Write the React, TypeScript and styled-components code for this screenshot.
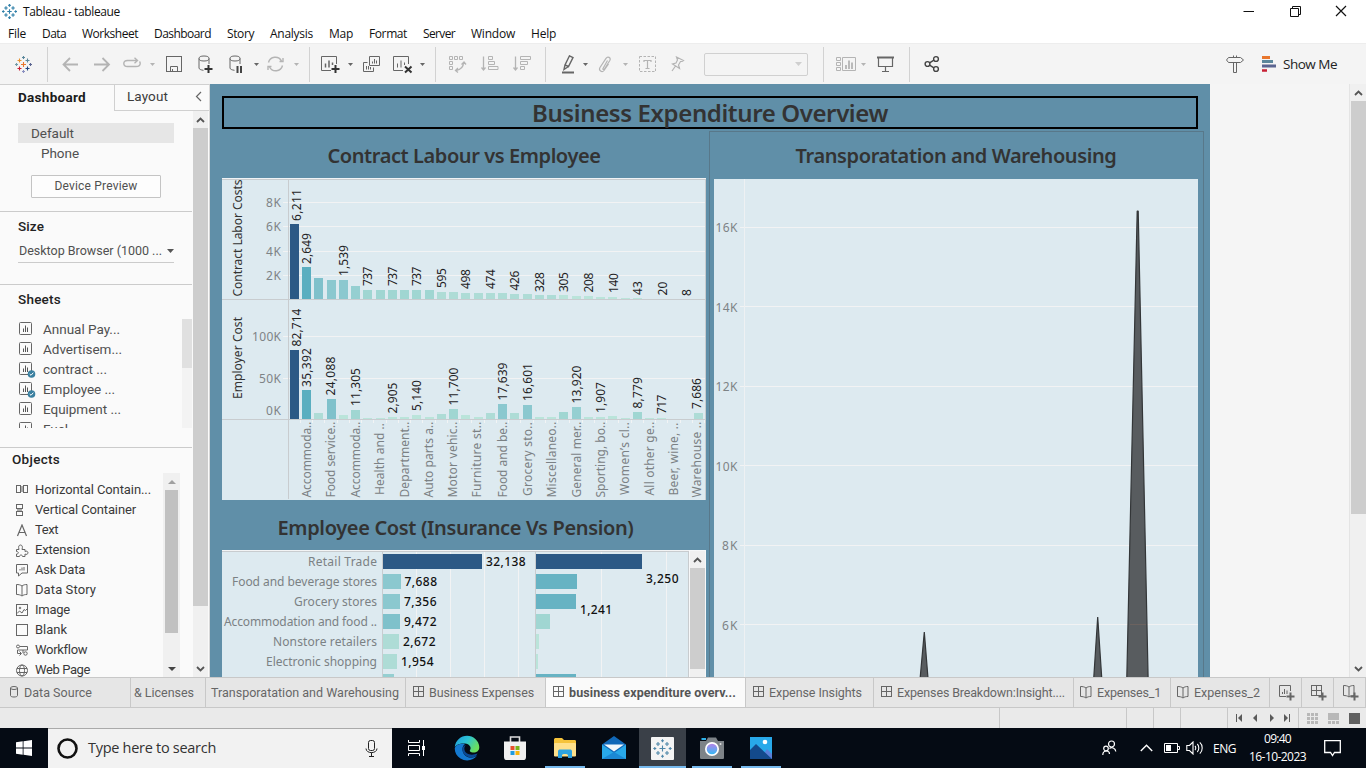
import React, { useLayoutEffect, useRef } from "react";
import styled, { createGlobalStyle, css } from "styled-components";

const UI = `Roboto, "Noto Sans", sans-serif`;
const WIN = `"Open Sans", "Noto Sans", sans-serif`;
const VIZ = `"Noto Sans", "Open Sans", sans-serif`;

const Global = createGlobalStyle`
  * { box-sizing: border-box; }
  body { margin: 0; background: #f5f5f5; font-family: ${UI}; overflow: hidden; }
  svg { display: block; flex: none; }
`;

/* ---------- text that is tracked to a given width ---------- */
const Txt = styled.span<{ $s: number; $wt?: number; $c?: string; $f?: string }>`
  display: inline-block;
  flex: none;
  white-space: pre;
  font-family: ${(p) => p.$f || UI};
  font-size: ${(p) => p.$s}px;
  font-weight: ${(p) => p.$wt || 400};
  color: ${(p) => p.$c || "#505050"};
  line-height: 1.25;
`;

type FitProps = { w: number; s: number; wt?: number; c?: string; f?: string; children: string };
function Fit({ w, s, wt, c, f, children }: FitProps) {
  const ref = useRef<HTMLSpanElement>(null);
  useLayoutEffect(() => {
    const el = ref.current;
    if (!el) return;
    el.style.letterSpacing = "0px";
    const natural = el.getBoundingClientRect().width;
    el.style.letterSpacing = `${(w - natural) / children.length}px`;
  }, [w, children]);
  return (
    <Txt ref={ref} $s={s} $wt={wt} $c={c} $f={f}>
      {children}
    </Txt>
  );
}

/* ---------- shell ---------- */
const Shell = styled.div`
  width: 1366px;
  height: 768px;
  display: flex;
  flex-direction: column;
  overflow: hidden;
`;
const Gap = styled.div<{ $w: number }>`
  width: ${(p) => p.$w}px;
  flex: none;
`;
const TitleBar = styled.header`
  height: 22px;
  flex: none;
  background: #fff;
  display: flex;
  align-items: center;
  padding: 1px 19px 0 2px;
  gap: 6px;
`;
const WinButtons = styled.div`
  margin-left: auto;
  display: flex;
  gap: 34px;
  padding-bottom: 2px;
`;
const MenuBar = styled.nav`
  height: 21px;
  flex: none;
  background: #fff;
  display: flex;
  align-items: center;
  padding: 2px 0 0 8px;
  gap: 16px;
`;
const Toolbar = styled.div`
  height: 41px;
  flex: none;
  background: #f4f4f4;
  border-top: 1px solid #ededed;
  display: flex;
  align-items: center;
`;
const Tool = styled.div<{ $ml: number; $dim?: boolean }>`
  margin-left: ${(p) => p.$ml}px;
  color: ${(p) => (p.$dim ? "#b4b4b4" : "#666")};
  flex: none;
`;
const ShowMe = styled.div`
  padding-bottom: 2px;
  margin-left: 6px;
`;
const Rule = styled.div<{ $ml: number }>`
  margin-left: ${(p) => p.$ml}px;
  width: 1px;
  height: 35px;
  background: #d2d2d2;
  flex: none;
`;
const Combo = styled.div`
  margin-left: 19px;
  width: 104px;
  height: 23px;
  border: 1px solid #d0d0d0;
  border-radius: 2px;
  display: flex;
  align-items: center;
  justify-content: flex-end;
  padding-right: 5px;
  color: #cfcfcf;
`;
const Work = styled.main`
  height: 593px;
  flex: none;
  display: flex;
`;

/* ---------- sidebar ---------- */
const Side = styled.aside`
  width: 210px;
  flex: none;
  background: #fafafa;
  border-right: 1px solid #d8d8d8;
  border-top: 1px solid #d0d0d0;
  display: flex;
  flex-direction: column;
  overflow: hidden;
`;
const SideTabs = styled.div`
  height: 26px;
  flex: none;
  display: flex;
`;
const ActiveTab = styled.div`
  width: 114px;
  padding: 2px 0 0 18px;
`;
const IdleTab = styled.div`
  flex: 1;
  border-left: 1px solid #d0d0d0;
  border-bottom: 1px solid #d0d0d0;
  padding: 3px 7px 0 12px;
  display: flex;
  justify-content: space-between;
`;
const SideBody = styled.div`
  display: flex;
  flex: 1;
  min-height: 0;
`;
const SideCol = styled.div`
  width: 193px;
  flex: none;
  overflow: hidden;
`;
const Section = styled.section<{ $h: number; $pl: number; $pt: number }>`
  height: ${(p) => p.$h}px;
  padding: ${(p) => p.$pt}px 0 0 ${(p) => p.$pl}px;
  width: 192px;
  border-bottom: 1px solid #cbcbcb;
  overflow: hidden;
  &:last-child { border-bottom: 0; }
`;
const DeviceRow = styled.div<{ $on?: boolean; $pl: number }>`
  width: 156px;
  height: 20px;
  display: flex;
  align-items: center;
  padding-left: ${(p) => p.$pl}px;
  background: ${(p) => (p.$on ? "#e6e6e6" : "transparent")};
`;
const PreviewButton = styled.div`
  margin: 12px 0 0 13px;
  width: 130px;
  height: 23px;
  border: 1px solid #c4c4c4;
  border-radius: 1px;
  display: flex;
  align-items: center;
  justify-content: center;
  background: #fdfdfd;
`;
const SizeSelect = styled.div`
  width: 156px;
  height: 24px;
  margin-top: 4px;
  border-bottom: 1px solid #cbcbcb;
  display: flex;
  align-items: center;
  justify-content: space-between;
  padding-left: 1px;
  color: #555;
`;
const ListArea = styled.div<{ $h: number; $mt: number }>`
  height: ${(p) => p.$h}px;
  margin-top: ${(p) => p.$mt}px;
  display: flex;
  justify-content: space-between;
  overflow: hidden;
`;
const ListCol = styled.div<{ $pt?: number; $pl?: number }>`
  padding: ${(p) => p.$pt || 0}px 0 0 ${(p) => p.$pl || 0}px;
`;
const ListRow = styled.div<{ $gap: number }>`
  height: 20px;
  display: flex;
  align-items: center;
  gap: ${(p) => p.$gap}px;
`;
const Track = styled.div<{ $w: number; $bg?: string }>`
  width: ${(p) => p.$w}px;
  flex: none;
  background: ${(p) => p.$bg || "#f0f0f0"};
  display: flex;
  flex-direction: column;
  align-items: center;
`;
const Cap = styled.div<{ $h: number; $c?: string }>`
  height: ${(p) => p.$h}px;
  width: 100%;
  flex: none;
  display: flex;
  align-items: center;
  justify-content: center;
  color: ${(p) => p.$c || "#555"};
`;
const Thumb = styled.div<{ $w: number; $h: number; $c?: string }>`
  width: ${(p) => p.$w}px;
  height: ${(p) => p.$h}px;
  flex: none;
  background: ${(p) => p.$c || "#cdcdcd"};
`;
const Grow = styled.div`
  flex: 1;
`;
const ObjIcon = styled.div`
  width: 13px;
  margin-left: 4px;
  color: #666;
`;
const ObjTrack = styled(Track)`
  margin-right: 12px;
`;

/* ---------- dashboard canvas ---------- */
const Canvas = styled.div`
  width: 1000px;
  height: 593px;
  flex: none;
  background: #608fa8;
  padding: 12px 6px 0 12px;
  overflow: hidden;
  display: flex;
  flex-direction: column;
`;
const Heading = styled.div`
  width: 976px;
  height: 33px;
  flex: none;
  border: 2px solid #000;
  display: flex;
  align-items: center;
  justify-content: center;
`;
const Columns = styled.div`
  display: flex;
  padding-top: 2px;
  flex: 1;
  min-height: 0;
`;
const LeftCol = styled.div`
  width: 487px;
  flex: none;
`;
const RightCol = styled.div`
  width: 495px;
  height: 700px;
  flex: none;
  border: 1px solid #58788a;
  padding-left: 4px;
`;
const SheetTitle = styled.div<{ $h: number; $pt: number; $w: number }>`
  width: ${(p) => p.$w}px;
  height: ${(p) => p.$h}px;
  padding-top: ${(p) => p.$pt}px;
  display: flex;
  justify-content: center;
  align-items: flex-start;
`;
const Split = styled.div`
  display: flex;
`;
const WhiteEdge = styled.div`
  width: 17px;
  padding: 1px 1px 0;
  background: #f7f8f9;
  display: flex;
`;
const Rest = styled.div`
  flex: 1;
  background: #f5f5f5;
  border-right: 1px solid #e4e4e4;
`;

/* ---------- bottom ---------- */
const Tabs = styled.div`
  height: 31px;
  flex: none;
  background: #e6e6e6;
  border-top: 1px solid #c8c8c8;
  border-bottom: 1px solid #c8c8c8;
  display: flex;
`;
const Tab = styled.div<{ $w: number; $pl?: number; $on?: boolean }>`
  width: ${(p) => p.$w}px;
  flex: none;
  height: 29px;
  border-right: 1px solid #c8c8c8;
  padding-left: ${(p) => p.$pl ?? 7}px;
  display: flex;
  align-items: center;
  gap: 5px;
  color: #666;
  overflow: hidden;
  ${(p) => p.$on && css`background: #fafafa;`}
`;
const Status = styled.div`
  height: 20px;
  flex: none;
  background: #eaeaea;
  display: flex;
  justify-content: flex-end;
`;
const Cell = styled.div<{ $w: number; $gap?: number; $pl?: number }>`
  width: ${(p) => p.$w}px;
  border-left: 1px solid #c8c8c8;
  padding-left: ${(p) => p.$pl || 0}px;
  display: flex;
  align-items: center;
  justify-content: center;
  gap: ${(p) => p.$gap || 0}px;
  color: #5a5a5a;
`;
const Taskbar = styled.footer`
  height: 40px;
  flex: none;
  background: #050b14;
  display: flex;
  align-items: stretch;
`;
const TaskItem = styled.div<{ $w: number; $run?: boolean; $on?: boolean }>`
  width: ${(p) => p.$w}px;
  flex: none;
  display: flex;
  align-items: center;
  justify-content: center;
  border-bottom: 2px solid ${(p) => (p.$run ? "#76b9ed" : "transparent")};
  padding-top: 2px;
  background: ${(p) => (p.$on ? "#3a4048" : "transparent")} padding-box;
`;
const Search = styled.div`
  width: 344px;
  flex: none;
  background: #f2f2f2;
  border-top: 1px solid #aaa;
  display: flex;
  align-items: center;
  padding: 0 14px 0 8px;
  gap: 9px;
`;
const Tray = styled.div`
  margin-left: auto;
  display: flex;
  align-items: center;
  color: #fff;
`;
const Clock = styled.div`
  display: flex;
  flex-direction: column;
  align-items: center;
  gap: 3px;
  margin: -1px 18px 0 13px;
`;

/* ---------- small drawings ---------- */
const Ico = ({ w, h, children, sw = 1 }: { w: number; h: number; children: React.ReactNode; sw?: number }) => (
  <svg width={w} height={h} viewBox={`0 0 ${w} ${h}`} fill="none" stroke="currentColor" strokeWidth={sw}>
    {children}
  </svg>
);
const Caret = ({ w = 5, up }: { w?: number; up?: boolean }) => (
  <svg width={w} height={Math.ceil(w / 2)} viewBox="0 0 10 5" preserveAspectRatio="none">
    <path d={up ? "M0 5L5 0L10 5Z" : "M0 0H10L5 5Z"} fill="currentColor" />
  </svg>
);
const Chevron = ({ down }: { down?: boolean }) => (
  <Ico w={9} h={6} sw={1.8}>
    <path d={down ? "M1 1L4.5 4.5L8 1" : "M1 5L4.5 1.5L8 5"} />
  </Ico>
);
const plus = (x: number, y: number, r: number) => `M${x - r} ${y}H${x + r}M${x} ${y - r}V${y + r}`;
const Logo = ({ size = 17, mono }: { size?: number; mono?: string }) => (
  <svg width={size} height={size} viewBox="0 0 17 17" fill="none" strokeWidth={mono ? 1.3 : 1.1}>
    <path d={plus(8.5, 8.5, 2.5)} stroke={mono || "#e8762d"} />
    <path d={plus(4.5, 4.5, 2)} stroke={mono || "#e8912d"} />
    <path d={plus(12.5, 4.5, 2)} stroke={mono || "#5b879b"} />
    <path d={plus(4.5, 12.5, 2)} stroke={mono || "#c72035"} />
    <path d={plus(12.5, 12.5, 2)} stroke={mono || "#1f447e"} />
    <path d={plus(8.5, 1.5, 1.5)} stroke={mono || "#59879b"} />
    <path d={plus(8.5, 15.5, 1.5)} stroke={mono || "#8a8fc0"} />
    <path d={plus(1.5, 8.5, 1.5)} stroke={mono || "#7199a6"} />
    <path d={plus(15.5, 8.5, 1.5)} stroke={mono || "#5c6692"} />
  </svg>
);
const Cylinder = ({ children }: { children?: React.ReactNode }) => (
  <Ico w={15} h={19}>
    <ellipse cx="6" cy="3.5" rx="5" ry="2.5" />
    <path d="M1 3.5V13c0 1.2 2 2 4.5 2.3M11 3.5V9" />
    {children}
  </Ico>
);
const SheetGlyph = ({ used }: { used?: boolean }) => (
  <Ico w={17} h={18}>
    <rect x="0.5" y="2.5" width="12" height="12" rx="1" stroke="#666" />
    <path d="M4.5 12V8.5M6.500 12V5.500M8.500 12V7.500" stroke="#555" />
    {used && (
      <>
        <circle cx="12.5" cy="14" r="3.8" fill="#3a80a0" stroke="none" />
        <path d="M10.7 14l1.300 1.300 2.300-2.600" stroke="#fff" />
      </>
    )}
  </Ico>
);
const GridGlyph = ({ add }: { add?: boolean }) => (
  <Ico w={add ? 16 : 11} h={add ? 17 : 15}>
    <rect x="0.5" y="1.5" width="10" height="10" />
    <path d="M5.5 1.5V11.5M0.5 6.5H10.5" />
    {add && <path d="M11.5 8.5v8M7.5 12.5h8" strokeWidth="2" />}
  </Ico>
);
const BookGlyph = ({ add }: { add?: boolean }) => (
  <Ico w={add ? 16 : 12} h={add ? 17 : 15}>
    <path d="M0.5 1.5c2 0 4 .3 5.5 1.5 1.5-1.200 3-1.500 5-1.500V11.500c-2 0-3.500.3-5 1.500C4.500 11.800 2.500 11.500 0.500 11.500zM6 3v9.500" />
    {add && <path d="M11.5 8.5v8M7.5 12.5h8" strokeWidth="2" />}
  </Ico>
);
const BarSheetAdd = () => (
  <Ico w={16} h={17}>
    <path d="M11.5 7V1.5H0.5V12.5H7" />
    <path d="M3.5 10V8M5.5 10V5M8 10V6.5" />
    <path d="M11.5 8.5v8M7.5 12.5h8" strokeWidth="2" />
  </Ico>
);

/* ---------- charts ---------- */
const NAVY = "#2c5985";
const barX = (i: number) => Math.round(67.9 + i * 12.25);

type VLabel = [string, number, number, number];
const topBars = [75, 32, 21, 19, 19, 13, 9, 9, 9, 9, 9, 9, 7, 7, 6, 6, 6, 6, 5, 5, 4, 4, 4, 3, 3, 2, 2, 1, 1];
const topColors = [NAVY, "#5aaec0", "#7fc1cb", "#8bc8cf", "#8bc8cf", "#95cfd1"];
const bottomBars = [69, 29, 6, 20, 4, 9, 1, 1, 2, 2, 4, 2, 5, 10, 4, 2, 6, 15, 6, 14, 2, 2, 7, 12, 2, 2, 3, 1, 7, 1, 1, 0, 0, 6];
const topColor = (i: number) => topColors[i] || (i < 12 ? "#a0d6d2" : i < 22 ? "#aedcd6" : "#bae4da");
const bottomColor = (h: number) =>
  h > 60 ? NAVY : h > 25 ? "#5aaec0" : h > 16 ? "#7fc1cb" : h > 13 ? "#8bc8cf" : h > 11 ? "#95cfd1" : h > 6 ? "#a0d6d2" : h > 4 ? "#aedcd6" : "#bae4da";

/* text, centre x, bottom y, length */
const topLabels: VLabel[] = [
  ["6,211", 297, 221, 32], ["2,649", 306.5, 264, 31], ["1,539", 343.5, 276, 31], ["737", 367.7, 286, 19.5],
  ["737", 392.7, 286, 19.5], ["737", 416.7, 286, 19.5], ["595", 441.7, 288, 20], ["498", 465.7, 289, 20],
  ["474", 490.7, 289, 20], ["426", 515, 290.5, 20], ["328", 539.5, 292, 20], ["305", 563.5, 292, 20],
  ["208", 588.5, 292.5, 20], ["140", 613.5, 293, 20], ["43", 637.5, 295, 14], ["20", 662.5, 295.5, 14], ["8", 686.5, 296, 7],
];
const bottomLabels: VLabel[] = [
  ["82,714", 297, 346.5, 38], ["35,392", 306.7, 387, 39], ["24,088", 330.7, 395.5, 39], ["11,305", 355.7, 406, 38],
  ["2,905", 392.7, 413.5, 31], ["5,140", 417, 411, 31], ["11,700", 453.7, 405.5, 38], ["17,639", 502.5, 400.5, 38],
  ["16,601", 528, 401, 38], ["13,920", 577, 403.5, 38], ["1,907", 601, 413, 31], ["8,779", 637.5, 408.5, 31.5],
  ["717", 662, 414, 19.5], ["7,686", 696.5, 409, 31],
];
const categories: VLabel[] = [
  ["Accommoda..", 306.7, 497.5, 76], ["Food service..", 330.7, 497.5, 76], ["Accommoda..", 355.7, 497.5, 76],
  ["Health and ..", 379.7, 495, 72], ["Department..", 404.5, 497.5, 76], ["Auto parts a..", 429, 497.5, 76],
  ["Motor vehic..", 453, 497.5, 76], ["Furniture st..", 477, 497.5, 76], ["Food and be..", 502.5, 497.5, 76],
  ["Grocery sto..", 527.5, 496, 74], ["Miscellaneo..", 551.5, 497.5, 76], ["General mer..", 577, 497.5, 76],
  ["Sporting, bo..", 601, 497.5, 76], ["Women’s cl..", 625, 495, 73], ["All other ge..", 649.5, 495.5, 74],
  ["Beer, wine, ..", 674, 495.5, 73], ["Warehouse ..", 696.5, 497.5, 76],
];
const Vertical = ({ d, color }: { d: VLabel; color: string }) => (
  <text
    transform={`translate(${d[1] - 222 + 4} ${d[2] - 178}) rotate(-90)`}
    textLength={d[3]}
    fontFamily={VIZ}
    fontSize="12"
    fill={color}
  >
    {d[0]}
  </text>
);

const LabourChart = () => (
  <svg width={484} height={322} viewBox="0 0 484 322">
    <rect width="484" height="322" fill="#ddeaf0" />
    <g shapeRendering="crispEdges">
      {[24, 48, 73, 97, 158, 200].map((y) => (
        <rect key={y} x="61" y={y} width="422" height="1" fill="#f2f3f4" />
      ))}
      {topBars.map((h, i) => (
        <rect key={i} x={barX(i)} y={121 - h} width="9" height={h} fill={topColor(i)} />
      ))}
      {bottomBars.map((h, i) => (
        <rect key={i} x={barX(i)} y={241 - h} width="9" height={h} fill={bottomColor(h)} />
      ))}
      {bottomBars.map((_, i) => (
        <rect key={i} x={barX(i) + 10} y="242" width="1" height="3" fill="#f2f4f5" />
      ))}
      <rect x="0" y="0" width="484" height="1" fill="#f0f3f5" />
      <rect x="0" y="1" width="484" height="1" fill="#c8cccf" />
      <rect x="0" y="121" width="484" height="1" fill="#c8cccf" />
      <rect x="0" y="241" width="484" height="1" fill="#c8cccf" />
      <rect x="66" y="1" width="1" height="320" fill="#c8cccf" />
      <rect x="483" y="1" width="1" height="321" fill="#c8cccf" />
    </g>
    {[["8K", 24, 15], ["6K", 48.5, 15], ["4K", 73, 15], ["2K", 97.5, 15], ["100K", 158.5, 29], ["50K", 200.5, 22], ["0K", 232.5, 15]].map(
      ([t, y, w]) => (
        <text key={t} x={59 - Number(w)} y={Number(y) + 4.5} textLength={w} fontFamily={VIZ} fontSize="12" fill="#7d8386">
          {t}
        </text>
      )
    )}
    <Vertical d={["Contract Labor Costs", 238, 296.5, 117]} color="#333" />
    <Vertical d={["Employer Cost", 238, 399, 82]} color="#333" />
    {topLabels.map((d, i) => <Vertical key={i} d={d} color="#1f2325" />)}
    {bottomLabels.map((d, i) => <Vertical key={i} d={d} color="#1f2325" />)}
    {categories.map((d, i) => <Vertical key={i} d={d} color="#7b8184" />)}
  </svg>
);

type CostRow = { name: string; len: number; a: number; label?: string; b: number; ca: string; cb: string };
const costs: CostRow[] = [
  { name: "Retail Trade", len: 69, a: 99, label: "32,138", b: 106, ca: NAVY, cb: NAVY },
  { name: "Food and beverage stores", len: 145, a: 18, label: "7,688", b: 41, ca: "#8bc8cf", cb: "#67b3c3" },
  { name: "Grocery stores", len: 83, a: 17, label: "7,356", b: 40, ca: "#8bc8cf", cb: "#67b3c3" },
  { name: "Accommodation and food ..", len: 153, a: 17, label: "9,472", b: 14, ca: "#7fc1cb", cb: "#a0d6d2" },
  { name: "Nonstore retailers", len: 104, a: 16, label: "2,672", b: 3, ca: "#aedcd6", cb: "#bae4da" },
  { name: "Electronic shopping", len: 111, a: 14, label: "1,954", b: 2, ca: "#aedcd6", cb: "#bae4da" },
  { name: "", len: 0, a: 11, b: 40, ca: "#95cfd1", cb: "#67b3c3" },
];
const CostChart = () => (
  <svg width={467} height={127} viewBox="0 0 467 127">
    <rect width="467" height="127" fill="#ddeaf0" />
    <g shapeRendering="crispEdges">
      {[194, 228, 262, 296, 379, 444].map((x) => (
        <rect key={x} x={x} y="2" width="1" height="125" fill="#f2f3f4" />
      ))}
      {costs.map((r, i) => (
        <g key={i}>
          <rect x="161" y={4 + i * 20} width={r.a} height="15" fill={r.ca} />
          <rect x="314" y={4 + i * 20} width={r.b} height="15" fill={r.cb} />
        </g>
      ))}
      <rect width="467" height="1" fill="#f3f4f5" />
      <rect y="1" width="467" height="1" fill="#c8cccf" />
      <rect x="160" y="1" width="1" height="126" fill="#c8cccf" />
      <rect x="313" y="1" width="1" height="126" fill="#c8cccf" />
      <rect x="466" y="1" width="1" height="126" fill="#c8cccf" />
    </g>
    {costs.map((r, i) =>
      r.name ? (
        <g key={i} fontFamily={VIZ} fontSize="12">
          <text x={155 - r.len} y={16 + i * 20} textLength={r.len} fill="#7b8184">{r.name}</text>
          <text x={[264, 182.5, 182, 182, 181, 179][i]} y={16 + i * 20} textLength={i ? 32.5 : 39.5} fill="#111" fontWeight="500">{r.label}</text>
        </g>
      ) : null
    )}
    <text x="424" y="33" textLength="32.5" fontFamily={VIZ} fontSize="12" fontWeight="500" fill="#111">3,250</text>
    <text x="358" y="64" textLength="32" fontFamily={VIZ} fontSize="12" fontWeight="500" fill="#111">1,241</text>
  </svg>
);

const WarehouseChart = () => (
  <svg width={484} height={498} viewBox="0 0 484 498">
    <rect width="484" height="498" fill="#ddeaf0" />
    <g shapeRendering="crispEdges">
      {[48, 127, 207, 286, 366, 445].map((y) => (
        <rect key={y} x="26" y={y} width="458" height="1" fill="#f2f3f4" />
      ))}
      <rect x="30" y="0" width="1" height="498" fill="#eef1f3" />
    </g>
    <g fill="#585c5f" stroke="#333638" strokeWidth="1.2" strokeLinejoin="bevel">
      <path d="M205.8 503L210.3 453L214.3 503Z" />
      <path d="M379.5 503L383.7 438L388 503Z" />
      <path d="M412.7 503L423.2 32L424.2 32L434.200 503Z" />
    </g>
    <path d="M416 445.5H432" stroke="#6b625f" strokeWidth="1" />
    {["16K", "14K", "12K", "10K", "8K", "6K"].map((t, i) => (
      <text key={t} x={t.length > 2 ? 1.5 : 8} y={53 + i * 79.5} textLength={t.length > 2 ? 22 : 15.5} fontFamily={VIZ} fontSize="12" fill="#7d8386">
        {t}
      </text>
    ))}
  </svg>
);

/* ---------- data ---------- */
const menus: [string, number][] = [
  ["File", 18], ["Data", 24], ["Worksheet", 56], ["Dashboard", 57], ["Story", 27], ["Analysis", 43],
  ["Map", 24], ["Format", 38], ["Server", 32], ["Window", 44], ["Help", 25],
];
const sheets: [string, number, boolean][] = [
  ["Annual Pay...", 77, false], ["Advertisem...", 79, false], ["contract ...", 64, true],
  ["Employee ...", 72, true], ["Equipment ...", 78, false], ["Fuel", 25, false],
];
const objects: [string, number, React.ReactNode][] = [
  ["Horizontal Contain...", 116, <Ico w={13} h={13}><rect x="0.5" y="1.5" width="4" height="7" /><rect x="7.5" y="1.5" width="4" height="7" /><path d="M6 2v6" strokeWidth="2" stroke="#aaa" /></Ico>],
  ["Vertical Container", 101, <Ico w={13} h={13}><rect x="0.5" y="0.5" width="6" height="4" /><rect x="0.5" y="7.5" width="6" height="4" /><path d="M1 6h5" strokeWidth="2" stroke="#aaa" /></Ico>],
  ["Text", 23, <Ico w={13} h={13}><path d="M1.500 12L6 1L10.500 12M3 8.500H9" strokeWidth="1.200" /></Ico>],
  ["Extension", 55, <Ico w={13} h={13}><path d="M.5 5.500H3C2 2.500 3 1 4.500 1S7 2.500 6 5.500H9V7.500C10.500 6.500 12 7.500 12 8.800S10.500 11 9 10V12.500H6.500C6.500 10.500 3.500 10.500 3.500 12.500H.5V10C3 10 3 7.500.5 7.500Z" /></Ico>],
  ["Ask Data", 50, <Ico w={13} h={13}><path d="M.5.5H11.500V9H6L2.500 12V9H.5Z" /><path d="M4 6.500V5M6 6.500V3.500M8 6.500V3" stroke="#999" strokeWidth="1.500" /></Ico>],
  ["Data Story", 61, <BookGlyph />],
  ["Image", 35, <Ico w={13} h={13}><rect x=".5" y=".5" width="11" height="11" /><path d="M1 9.500L3.500 7L6 9L8 5.500L9.500 6.500L11.500 4.500" /><circle cx="4" cy="4" r=".8" /></Ico>],
  ["Blank", 32, <Ico w={13} h={13}><rect x=".5" y=".5" width="11" height="11" /></Ico>],
  ["Workflow", 52, <Ico w={13} h={13}><circle cx="2" cy="2.500" r="1.500" /><path d="M4 2.500H11.500V6H1.500V9.500H5M3.500 7.500L5.500 9.500L3.500 11.500M7 6V9" /><circle cx="9.500" cy="9.500" r="1.700" /></Ico>],
  ["Web Page", 55, <Ico w={13} h={13}><circle cx="6" cy="6.500" r="5.500" /><ellipse cx="6" cy="6.500" rx="2.500" ry="5.500" /><path d="M1 4.500H11M1 8.500H11" /></Ico>],
];

function Sidebar() {
  return (
    <Side>
      <SideTabs>
        <ActiveTab><Fit w={68} s={13.5} wt={700} c="#1c1c1c">Dashboard</Fit></ActiveTab>
        <IdleTab>
          <Fit w={41} s={13.5} c="#3c3c3c">Layout</Fit>
          <Tool $ml={0}><Ico w={7} h={18} sw={1.2}><path d="M6 4L1.500 8.500L6 13" /></Ico></Tool>
        </IdleTab>
      </SideTabs>
      <SideBody>
        <SideCol>
          <Section $h={101} $pl={18} $pt={12}>
            <DeviceRow $on $pl={13}><Fit w={43} s={13.5}>Default</Fit></DeviceRow>
            <DeviceRow $pl={23}><Fit w={38} s={13.5}>Phone</Fit></DeviceRow>
            <PreviewButton><Fit w={83} s={12}>Device Preview</Fit></PreviewButton>
          </Section>
          <Section $h={73} $pl={18} $pt={4}>
            <Fit w={26} s={13.5} wt={500} c="#222">Size</Fit>
            <SizeSelect>
              <Fit w={143} s={12.5}>Desktop Browser (1000 ...</Fit>
              <Caret w={7} />
            </SizeSelect>
          </Section>
          <Section $h={163} $pl={18} $pt={4}>
            <Fit w={43} s={13.5} wt={500} c="#222">Sheets</Fit>
            <ListArea $h={109} $mt={11}>
              <ListCol $pl={1}>
                {sheets.map(([t, w, used]) => (
                  <ListRow key={t} $gap={7}>
                    <SheetGlyph used={used} />
                    <Fit w={w} s={13.5}>{t}</Fit>
                  </ListRow>
                ))}
              </ListCol>
              <Track $w={10} $bg="#f3f3f3"><Thumb $w={10} $h={49} $c="#e0e0e0" /></Track>
            </ListArea>
          </Section>
          <Section $h={240} $pl={12} $pt={1}>
            <Fit w={48} s={13.5} wt={500} c="#222">Objects</Fit>
            <ListArea $h={204} $mt={5}>
              <ListCol $pt={7}>
                {objects.map(([t, w, icon]) => (
                  <ListRow key={t} $gap={6}>
                    <ObjIcon>{icon}</ObjIcon>
                    <Fit w={w} s={13} c="#3a3a3a">{t}</Fit>
                  </ListRow>
                ))}
              </ListCol>
              <ObjTrack $w={17}>
                <Cap $h={17} $c="#a0a0a0"><Caret w={8} up /></Cap>
                <Thumb $w={13} $h={143} $c="#c1c1c1" />
                <Grow />
                <Cap $h={17} $c="#444"><Caret w={8} /></Cap>
              </ObjTrack>
            </ListArea>
          </Section>
        </SideCol>
        <Track $w={15}>
          <Cap $h={17}><Chevron /></Cap>
          <Thumb $w={15} $h={478} />
          <Grow />
          <Cap $h={17}><Chevron down /></Cap>
        </Track>
      </SideBody>
    </Side>
  );
}

export default function App() {
  return (
    <Shell>
      <Global />
      <TitleBar>
        <Logo size={15} mono="#2f7fa8" />
        <Fit w={97} s={12} f={WIN} c="#111">Tableau - tableaue</Fit>
        <WinButtons>
          <Ico w={12} h={12}><path d="M0.5 6.5H11" stroke="#111" /></Ico>
          <Ico w={12} h={12}><path d="M1.5 3.5H9.5V11.5H1.5ZM3.5 3.5V1.5H11.5V9.5H9.5" stroke="#111" /></Ico>
          <Ico w={12} h={12}><path d="M1 1L11 11M11 1L1 11" stroke="#111" strokeWidth="1.2" /></Ico>
        </WinButtons>
      </TitleBar>
      <MenuBar>
        {menus.map(([t, w]) => <Fit key={t} w={w} s={12} f={WIN} c="#111">{t}</Fit>)}
      </MenuBar>
      <Toolbar>
        <Tool $ml={15}><Logo size={17} /></Tool>
        <Rule $ml={15} />
        <Tool $ml={14} $dim><Ico w={17} h={15} sw={1.8}><path d="M16 7.5H1.5M8 1L1.5 7.5L8 14" /></Ico></Tool>
        <Tool $ml={15} $dim><Ico w={17} h={15} sw={1.8}><path d="M0 7.5H15M8.5 1L15 7.5L8.5 14" /></Ico></Tool>
        <Tool $ml={12} $dim><Ico w={18} h={14} sw={1.4}><path d="M14 3.5H4.5C2 3.5 .8 4.5 .8 6.5S2 9.5 4.5 9.5H13C16 9.5 17.2 8.5 17.2 6.5C17.2 5.5 17 5 16.5 4.500M11.500 .8L14.500 3.500L11.500 6.200" /></Ico></Tool>
        <Tool $ml={9} $dim><Caret /></Tool>
        <Tool $ml={11}><Ico w={16} h={17}><rect x=".5" y=".5" width="15" height="15" /><path d="M4.5 15.5V10.5H11.5V15.5M6.5 15V13" /></Ico></Tool>
        <Tool $ml={16}><Cylinder><path d="M10.5 10v8M6.5 14h8" stroke="#333" strokeWidth="2" /></Cylinder></Tool>
        <Tool $ml={16}><Cylinder><path d="M8.5 11v7M12 11v7" stroke="#444" strokeWidth="2" /></Cylinder></Tool>
        <Tool $ml={10}><Caret /></Tool>
        <Tool $ml={8} $dim><Ico w={17} h={16} sw={1.4}><path d="M1.5 6.5A7 7 0 0 1 14.5 5M15.5 9.5A7 7 0 0 1 2.5 11M16 2V5.5H12.5M1 14V10.5H4.5" /></Ico></Tool>
        <Tool $ml={10} $dim><Caret /></Tool>
        <Rule $ml={10} />
        <Tool $ml={10}><Ico w={20} h={19}><path d="M16.5 9V1.5H1.5V15.5H11" /><path d="M5.5 12.5V8.5M9 12.5V5.5M12.5 10V7.5" strokeWidth="1.5" /><path d="M15.5 10v8M11.5 14h8" stroke="#333" strokeWidth="2" /></Ico></Tool>
        <Tool $ml={8}><Caret /></Tool>
        <Tool $ml={10}><Ico w={18} h={17}><path d="M6.5 .5H16.5V9.5H6.5ZM4.5 6.5H.5V15.5H10.5V11.5M3.5 13.5V10M5.5 13.5V10M7.5 13.5V11M9.5 7.5V5.5M11.5 7.5V3M13.5 7.5V4.5" /></Ico></Tool>
        <Tool $ml={12}><Ico w={20} h={19}><path d="M15.5 9V1.5H.5V15.5H10M4.5 12.5V8.5M8 12.5V5.5M11.5 10V7.5" /><path d="M12 11.5L18.5 17.5M18.5 11.5L12 17.5" stroke="#333" strokeWidth="2" /></Ico></Tool>
        <Tool $ml={7}><Caret /></Tool>
        <Rule $ml={10} />
        <Tool $ml={13} $dim><Ico w={18} h={18}><path d="M.5 1.500h3v3h-3zM5.500 1.500h3v3h-3zM10.500 1.500h3v3h-3zM.5 6.500h3v3h-3zM.5 11.500h3v3h-3z" /><path d="M14.500 7.500C14.500 12 12 14.500 7 15.500M12.500 9.500L15 7L17 9.500M9 13L6.500 15.500L9 17.500" strokeWidth="1.300" /></Ico></Tool>
        <Tool $ml={14} $dim><Ico w={18} h={16}><path d="M2.5 0.5V14M.5 11.5L2.500 14L4.500 11.500" strokeWidth="1.300" /><path d="M7.500 .5h4v3h-4zM7.500 5.500h6v3h-6zM7.500 10.500h9.500v3h-9.500z" /></Ico></Tool>
        <Tool $ml={14} $dim><Ico w={18} h={16}><path d="M2.5 0.5V14M.5 11.5L2.500 14L4.500 11.500" strokeWidth="1.300" /><path d="M7.500 .5h10v3h-10zM7.500 5.500h7v3h-7zM7.500 10.500h4v3h-4z" /></Ico></Tool>
        <Rule $ml={14} />
        <Tool $ml={16}><Ico w={13} h={19}><path d="M7.500 .8L11 2.500L6.500 11.500L3 10ZM3 10L2 14.500L6.500 11.500" strokeWidth="1.400" /><path d="M0 17.500H12" strokeWidth="2" /></Ico></Tool>
        <Tool $ml={8}><Caret /></Tool>
        <Tool $ml={10} $dim><Ico w={14} h={17} sw={1.2}><path d="M9.500 4.500L5 12.500C4.500 13.500 6 14 6.500 13L11.800 4.500C13.300 1.700 9.700 -.3 8 2.300L2 11.500C.3 14.500 4 17 6 14.500L10.500 8" /></Ico></Tool>
        <Tool $ml={11} $dim><Caret /></Tool>
        <Tool $ml={11} $dim><Ico w={17} h={17}><rect x=".5" y=".5" width="16" height="15" strokeDasharray="2.5 1.500" /><path d="M5 6V4.500H12V6M8.500 4.500V12.500M6.500 12.500H10.500" strokeWidth="1.200" /></Ico></Tool>
        <Tool $ml={15} $dim><Ico w={14} h={16} sw={1.2}><path d="M5.500 1L12.500 4.500L11 5.500L9.500 5.500L7.500 9L8.500 12.500L1.500 8L5 7L6.500 4ZM4.500 10L1 15" /></Ico></Tool>
        <Combo><Caret w={7} /></Combo>
        <Rule $ml={15} />
        <Tool $ml={12} $dim><Ico w={21} h={15}><path d="M.5 .5h4v3h-4zM.5 5.500h4v3h-4zM.5 10.500h4v3h-4zM6.500 .5h13v13h-13z" /><path d="M10 12V8M13 12V3.500M16 12V5.500" strokeWidth="1.800" /></Ico></Tool>
        <Tool $ml={4} $dim><Caret /></Tool>
        <Tool $ml={11}><Ico w={17} h={17}><path d="M0 1.500H17" strokeWidth="2" /><path d="M1.500 2V10.500H15.500V2M8.500 10.500V15.500M5 15.500H12" strokeWidth="1.200" /></Ico></Tool>
        <Rule $ml={15} />
        <Tool $ml={14}><Ico w={16} h={18} sw={1.4}><circle cx="3.500" cy="9" r="2.400" stroke="#444" /><circle cx="12" cy="4" r="2.400" stroke="#444" /><circle cx="12" cy="14" r="2.400" stroke="#444" /><path d="M5.600 7.800L9.900 5.200M5.600 10.200L9.900 12.800" stroke="#444" /></Ico></Tool>
        <Gap $w={286} />
        <Tool $ml={0}><Ico w={19} h={18}><path d="M2.5 2.500H14.500L17.500 5L14.500 7.500H2.500L.5 5ZM7.500 .5V2.500M10.500 .5V2.500M7.500 7.500V17.500H10.500V7.500" /></Ico></Tool>
        <Tool $ml={17}><Ico w={15} h={16}><path d="M0 1.500H8" stroke="#e8762d" strokeWidth="3" /><path d="M0 5.500H11" stroke="#5b879b" strokeWidth="3" /><path d="M0 10H14" stroke="#5b6591" strokeWidth="3" /><path d="M0 14.500H5" stroke="#c72035" strokeWidth="2.500" /></Ico></Tool>
        <ShowMe><Fit w={54} s={13.5} f={WIN} c="#222">Show Me</Fit></ShowMe>
      </Toolbar>

      <Work>
        <Sidebar />
        <Canvas>
          <Heading><Fit w={356} s={24} wt={600} f={VIZ} c="#333">Business Expenditure Overview</Fit></Heading>
          <Columns>
            <LeftCol>
              <SheetTitle $w={484} $h={47} $pt={12}><Fit w={273} s={20} wt={600} f={VIZ} c="#333">Contract Labour vs Employee</Fit></SheetTitle>
              <LabourChart />
              <SheetTitle $w={467} $h={50} $pt={15}><Fit w={356} s={20} wt={600} f={VIZ} c="#333">Employee Cost (Insurance Vs Pension)</Fit></SheetTitle>
              <Split>
                <CostChart />
                <WhiteEdge>
                  <Track $w={15}>
                    <Cap $h={17}><Chevron /></Cap>
                    <Thumb $w={15} $h={101} />
                  </Track>
                </WhiteEdge>
              </Split>
            </LeftCol>
            <RightCol>
              <SheetTitle $w={484} $h={47} $pt={11}><Fit w={321} s={20} wt={600} f={VIZ} c="#333">Transporatation and Warehousing</Fit></SheetTitle>
              <WarehouseChart />
            </RightCol>
          </Columns>
        </Canvas>
        <Rest />
        <Track $w={16}>
          <Cap $h={17}><Chevron /></Cap>
          <Thumb $w={15} $h={413} />
          <Grow />
          <Cap $h={17}><Chevron down /></Cap>
        </Track>
      </Work>

      <Tabs>
        <Tab $w={131} $pl={10}><Ico w={9} h={15}><ellipse cx="4" cy="3" rx="3.500" ry="1.500" /><path d="M.5 3V10.500C.5 12.500 7.500 12.500 7.500 10.500V3" /></Ico><Fit w={68} s={12.5} c="#666">Data Source</Fit></Tab>
        <Tab $w={75} $pl={3}><Fit w={60} s={12.5} c="#666">& Licenses</Fit></Tab>
        <Tab $w={200} $pl={5}><Fit w={188} s={12.5} c="#666">Transporatation and Warehousing</Fit></Tab>
        <Tab $w={140}><GridGlyph /><Fit w={105} s={12.5} c="#666">Business Expenses</Fit></Tab>
        <Tab $w={200} $on><GridGlyph /><Fit w={167} s={12.5} wt={700} c="#555">business expenditure overv...</Fit></Tab>
        <Tab $w={128}><GridGlyph /><Fit w={93} s={12.5} c="#666">Expense Insights</Fit></Tab>
        <Tab $w={200}><GridGlyph /><Fit w={168} s={12.5} c="#666">Expenses Breakdown:Insight....</Fit></Tab>
        <Tab $w={97} $pl={6}><BookGlyph /><Fit w={64} s={12.5} c="#666">Expenses_1</Fit></Tab>
        <Tab $w={99} $pl={6}><BookGlyph /><Fit w={66} s={12.5} c="#666">Expenses_2</Fit></Tab>
        <Tab $w={32} $pl={9}><BarSheetAdd /></Tab>
        <Tab $w={32} $pl={9}><GridGlyph add /></Tab>
        <Tab $w={32} $pl={9}><BookGlyph add /></Tab>
      </Tabs>
      <Status>
        <Cell $w={127} /><Cell $w={27} /><Cell $w={27} /><Cell $w={47} />
        <Cell $w={71} $gap={9}>
          <Ico w={7} h={8}><path d="M.5 0V8" /><path d="M6 0V8L2 4Z" fill="currentColor" stroke="none" /></Ico>
          <Ico w={7} h={8}><path d="M5 0V8L1 4Z" fill="currentColor" stroke="none" /></Ico>
          <Ico w={7} h={8}><path d="M2 0V8L6 4Z" fill="currentColor" stroke="none" /></Ico>
          <Ico w={7} h={8}><path d="M5.5 0V8" /><path d="M0 0V8L4 4Z" fill="currentColor" stroke="none" /></Ico>
        </Cell>
        <Cell $w={68} $gap={10} $pl={2}>
          <Ico w={11} h={11}><g fill="#b8b8b8" stroke="none">{[0, 4, 8].map((x) => [0, 4, 8].map((y) => <rect key={`${x}${y}`} x={x} y={y} width="3" height="3" />))}</g></Ico>
          <Ico w={11} h={11}><g fill="#b8b8b8" stroke="none"><rect width="11" height="7" />{[0, 4, 8].map((x) => <rect key={x} x={x} y="8" width="3" height="3" />)}</g></Ico>
          <Ico w={11} h={11}><rect width="11" height="11" fill="#606060" stroke="none" /></Ico>
        </Cell>
      </Status>

      <Taskbar>
        <TaskItem $w={48}><svg width="16" height="16" viewBox="0 0 16 16"><path fill="#fff" d="M0 2.200L6.700 1.300V7.600H0ZM7.500 1.200L16 0V7.600H7.500ZM0 8.400H6.700V14.700L0 13.800ZM7.500 8.400H16V16L7.500 14.800Z" /></svg></TaskItem>
        <Search>
          <Ico w={23} h={23} sw={2.6}><circle cx="11.500" cy="11.500" r="9" stroke="#111" /></Ico>
          <Fit w={128} s={14.5} f={WIN} c="#333">Type here to search</Fit>
          <Grow />
          <Ico w={13} h={17}><rect x="3.500" y=".5" width="6" height="10" rx="2" stroke="#222" /><path d="M1 8.500C1 14 12 14 12 8.500M6.500 12.500V16.500M4 16.500H9" stroke="#222" /></Ico>
        </Search>
        <TaskItem $w={48}><Ico w={17} h={16}><path d="M.5 0V2.500H11.500V0M.5 16V13.500H11.500V16M.5 5.500H11.500V10.500H.5ZM15.500 0V16" stroke="#fff" /><rect x="14" y="6" width="3" height="4" fill="#fff" stroke="none" /></Ico></TaskItem>
        <Gap $w={2} />
        <TaskItem $w={49}>
          <svg width="26" height="26" viewBox="0 0 26 26">
            <defs>
              <linearGradient id="eg" x1="0" y1="0" x2="1" y2=".5"><stop offset="0" stopColor="#1f9ade" /><stop offset=".5" stopColor="#2cc3d5" /><stop offset="1" stopColor="#6be05c" /></linearGradient>
            </defs>
            <path d="M.8 12A12.300 12.300 0 0 1 25.300 12C25.500 16 22 18 18.500 17.500C15.500 17 15.500 15.500 16.300 14.500C17.500 12.500 15.500 9 11 8.500C6 8 2 10 .8 12Z" fill="url(#eg)" />
            <path d="M.8 13C2 9.500 7 8 11 9C8.500 10.500 8 14 9 17C10.200 20.800 14 23 18 22.500C20 22.300 22 21.500 23.500 20C20 25.500 12 27 6.500 23.500C2.500 21 .5 17 .8 13Z" fill="#1479d0" />
            <path d="M12 10C9.500 12 10 16 12.500 18C15.500 20.300 20 20 23.500 18.500C22.500 21 20 22.500 17.500 22.500C12 22.500 8 18 8.500 14C8.800 12 10 10.200 12 10Z" fill="#0a4a94" />
          </svg>
        </TaskItem>
        <TaskItem $w={48}>
          <svg width="24" height="26" viewBox="0 0 24 26">
            <path d="M7.500 7V2H16.500V7" fill="none" stroke="#ddd" strokeWidth="1.600" />
            <path d="M1 6.500H23V22C23 23.500 22.500 25 21 25H3C1.500 25 1 23.500 1 22Z" fill="#f1f1f1" />
            <rect x="7.500" y="11" width="4" height="4" fill="#e8502d" /><rect x="12.500" y="11" width="4" height="4" fill="#7bb51a" />
            <rect x="7.500" y="16" width="4" height="4" fill="#1f9bde" /><rect x="12.500" y="16" width="4" height="4" fill="#f7b50c" />
          </svg>
        </TaskItem>
        <Gap $w={6} />
        <TaskItem $w={40} $run>
          <svg width="22" height="20" viewBox="0 0 22 20">
            <path d="M0 1.500C0 .5 1 0 1.500 0H8L10 2H20.500C21.500 2 22 2.500 22 3.500V18H0Z" fill="#f5c33b" />
            <rect y="5" width="22" height="13.500" rx="1" fill="#ffe08a" />
            <path d="M4 20V13.500C4 12 5 11.500 6 11.500H16C17 11.500 18 12 18 13.500V20H14V17C14 15.500 8 15.500 8 17V20Z" fill="#2ea3e0" />
          </svg>
        </TaskItem>
        <Gap $w={4} />
        <TaskItem $w={49}>
          <svg width="24" height="24" viewBox="0 0 24 24">
            <path d="M0 8.500L12 0L24 8.500V23H0Z" fill="#1168b8" />
            <path d="M0 8.500L12 17L24 8.500V23H0Z" fill="#28a8e8" />
            <path d="M0 23L12 16L24 23Z" fill="#1b88d4" />
            <path d="M2 8.500H22L12 15.600Z" fill="#f4f8fb" />
          </svg>
        </TaskItem>
        <Gap $w={1} />
        <TaskItem $w={47} $run $on>
          <svg width="23" height="23" viewBox="0 0 23 23"><rect width="23" height="23" rx="1" fill="#f4f4f4" /><g transform="translate(2 2)" fill="none" stroke="#4d86a8" strokeWidth="1.100"><path d={[plus(9.5, 9.5, 3), plus(5, 5, 2), plus(14, 5, 2), plus(5, 14, 2), plus(14, 14, 2), plus(9.5, 1.8, 1.5), plus(9.5, 17.2, 1.5), plus(1.8, 9.5, 1.5), plus(17.2, 9.5, 1.5)].join("")} /></g></svg>
        </TaskItem>
        <Gap $w={6} />
        <TaskItem $w={40} $run>
          <svg width="24" height="22" viewBox="0 0 24 22">
            <defs><linearGradient id="cg" x1="0" y1="0" x2="0" y2="1"><stop offset="0" stopColor="#b583e8" /><stop offset="1" stopColor="#35b8f5" /></linearGradient></defs>
            <path d="M1.500 3V1H6V3" fill="#2db0e8" />
            <path d="M0 4H6L8 .5H16L18 4H24V20.500C24 21.500 23.500 22 22.500 22H1.500C.5 22 0 21.500 0 20.500Z" fill="#7d8388" />
            <circle cx="12" cy="12" r="7" fill="#fff" /><circle cx="12" cy="12" r="5.300" fill="url(#cg)" /><circle cx="20.500" cy="7" r="1" fill="#ddd" />
          </svg>
        </TaskItem>
        <Gap $w={9} />
        <TaskItem $w={40} $run>
          <svg width="22" height="22" viewBox="0 0 22 22">
            <rect width="22" height="22" fill="#28a9ea" />
            <path d="M10 22L17 12L22 17V22Z" fill="#5a7fd8" /><path d="M0 13L6 7L22 22H0Z" fill="#134a8c" /><circle cx="15" cy="5" r="2.300" fill="#fff" />
          </svg>
        </TaskItem>
        <Tray>
          <Ico w={15} h={16} sw={1.2}><circle cx="9.500" cy="4" r="3" /><circle cx="4" cy="8.500" r="2.300" /><path d="M.8 15C.8 12.500 2.500 11 4.500 11S7.500 12.500 7.500 14M7.500 8.500C9.500 6.800 13.500 8 13.800 11.500" /></Ico>
          <Gap $w={23} />
          <Ico w={13} h={8} sw={1.4}><path d="M.8 7L6.500 1.300L12.200 7" /></Ico>
          <Gap $w={11} />
          <Ico w={16} h={10}><path d="M.5 .5H13.500V9.500H.5ZM14 3.500H15.500V6.500H14" /><rect x="2" y="2" width="5" height="6" fill="#fff" stroke="none" /></Ico>
          <Gap $w={6} />
          <Ico w={18} h={14} sw={1.1}><path d="M.8 4.500H3.500L7 1V13L3.500 9.500H.8ZM9 5C10 6 10 8 9 9M11.300 3C13.300 5 13.300 9 11.300 11M13.800 1.300C17 4 17 10 13.800 12.700" /></Ico>
          <Gap $w={9} />
          <Fit w={23} s={12} f={WIN} c="#fff">ENG</Fit>
          <Clock>
            <Fit w={27} s={12} f={WIN} c="#fff">09:40</Fit>
            <Fit w={57} s={12} f={WIN} c="#fff">16-10-2023</Fit>
          </Clock>
          <Ico w={17} h={17} sw={1.3}><path d="M.7 .7H16.300V12.500H10.500L8.500 15.500L6.500 12.500H.7Z" /></Ico>
          <Gap $w={25} />
        </Tray>
      </Taskbar>
    </Shell>
  );
}
